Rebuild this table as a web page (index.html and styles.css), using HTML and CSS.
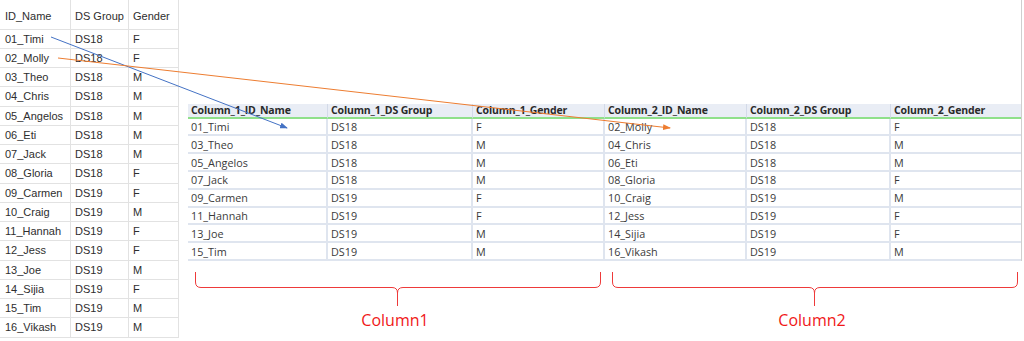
FILE: index.html
```html
<!DOCTYPE html>
<html>
<head>
<meta charset="utf-8">
<link rel="stylesheet" href="styles.css">
</head>
<body>
<div class="page">
  <div class="src">
    <div class="c h">ID_Name</div><div class="c h">DS Group</div><div class="c h">Gender</div>
    <div class="c">01_Timi</div><div class="c">DS18</div><div class="c">F</div>
    <div class="c">02_Molly</div><div class="c">DS18</div><div class="c">F</div>
    <div class="c">03_Theo</div><div class="c">DS18</div><div class="c">M</div>
    <div class="c">04_Chris</div><div class="c">DS18</div><div class="c">M</div>
    <div class="c">05_Angelos</div><div class="c">DS18</div><div class="c">M</div>
    <div class="c">06_Eti</div><div class="c">DS18</div><div class="c">M</div>
    <div class="c">07_Jack</div><div class="c">DS18</div><div class="c">M</div>
    <div class="c">08_Gloria</div><div class="c">DS18</div><div class="c">F</div>
    <div class="c">09_Carmen</div><div class="c">DS19</div><div class="c">F</div>
    <div class="c">10_Craig</div><div class="c">DS19</div><div class="c">M</div>
    <div class="c">11_Hannah</div><div class="c">DS19</div><div class="c">F</div>
    <div class="c">12_Jess</div><div class="c">DS19</div><div class="c">F</div>
    <div class="c">13_Joe</div><div class="c">DS19</div><div class="c">M</div>
    <div class="c">14_Sijia</div><div class="c">DS19</div><div class="c">F</div>
    <div class="c">15_Tim</div><div class="c">DS19</div><div class="c">M</div>
    <div class="c">16_Vikash</div><div class="c">DS19</div><div class="c">M</div>
  </div>
  <div class="main">
    <div class="result">
      <div class="grid">
        <div class="g gh">Column_1_ID_Name</div><div class="g gh">Column_1_DS Group</div><div class="g gh">Column_1_Gender</div><div class="g gh">Column_2_ID_Name</div><div class="g gh">Column_2_DS Group</div><div class="g gh">Column_2_Gender</div>
        <div class="g">01_Timi</div><div class="g">DS18</div><div class="g">F</div><div class="g">02_Molly</div><div class="g">DS18</div><div class="g">F</div>
        <div class="g">03_Theo</div><div class="g">DS18</div><div class="g">M</div><div class="g">04_Chris</div><div class="g">DS18</div><div class="g">M</div>
        <div class="g">05_Angelos</div><div class="g">DS18</div><div class="g">M</div><div class="g">06_Eti</div><div class="g">DS18</div><div class="g">M</div>
        <div class="g">07_Jack</div><div class="g">DS18</div><div class="g">M</div><div class="g">08_Gloria</div><div class="g">DS18</div><div class="g">F</div>
        <div class="g">09_Carmen</div><div class="g">DS19</div><div class="g">F</div><div class="g">10_Craig</div><div class="g">DS19</div><div class="g">M</div>
        <div class="g">11_Hannah</div><div class="g">DS19</div><div class="g">F</div><div class="g">12_Jess</div><div class="g">DS19</div><div class="g">F</div>
        <div class="g">13_Joe</div><div class="g">DS19</div><div class="g">M</div><div class="g">14_Sijia</div><div class="g">DS19</div><div class="g">F</div>
        <div class="g">15_Tim</div><div class="g">DS19</div><div class="g">M</div><div class="g">16_Vikash</div><div class="g">DS19</div><div class="g">M</div>
      </div>
    </div>
    <div class="notes">
      <div class="note">
        <svg class="brace" width="406" height="35" viewBox="0 0 406 35"><path d="M0.5,0 V10 Q0.5,15.5 6,15.5 H197 Q202.5,15.5 202.5,21 V34 M405.5,0 V10 Q405.5,15.5 400,15.5 H208 Q202.5,15.5 202.5,21"/></svg>
        <div class="label">Column1</div>
      </div>
      <div class="note">
        <svg class="brace" width="406" height="35" viewBox="0 0 406 35"><path d="M0.5,0 V10 Q0.5,15.5 6,15.5 H197 Q202.5,15.5 202.5,21 V34 M405.5,0 V10 Q405.5,15.5 400,15.5 H208 Q202.5,15.5 202.5,21"/></svg>
        <div class="label">Column2</div>
      </div>
    </div>
  </div>
</div>
<svg class="arrows" width="1024" height="341" viewBox="0 0 1024 341">
  <defs>
    <marker id="hb" markerWidth="8" markerHeight="6" refX="7" refY="3" orient="auto" markerUnits="userSpaceOnUse"><path d="M0,0 L8,3 L0,6 Z" fill="#4472c4"/></marker>
    <marker id="ho" markerWidth="8" markerHeight="6" refX="7" refY="3" orient="auto" markerUnits="userSpaceOnUse"><path d="M0,0 L8,3 L0,6 Z" fill="#ed7d31"/></marker>
  </defs>
  <line x1="51" y1="37" x2="287" y2="128" stroke="#4472c4" stroke-width="1" marker-end="url(#hb)"/>
  <line x1="58" y1="58" x2="670" y2="128" stroke="#ed7d31" stroke-width="1" marker-end="url(#ho)"/>
</svg>
</body>
</html>
```

FILE: styles.css
```css
html, body {
  margin: 0;
  padding: 0;
  background: #ffffff;
}
body {
  position: relative;
  width: 1024px;
  height: 341px;
  overflow: hidden;
}
.page {
  display: flex;
  align-items: flex-start;
}
.src {
  display: grid;
  grid-template-columns: 71px 58px 50px;
  grid-template-rows: 29.5px;
  grid-auto-rows: 19.25px;
  font-family: "Liberation Sans", Arial, sans-serif;
  font-size: 11px;
  color: #2e2e2e;
  flex: none;
}
.c {
  box-sizing: border-box;
  border-right: 1px solid #e2e2e2;
  border-bottom: 1px solid #e2e2e2;
  padding-left: 4px;
  display: flex;
  align-items: center;
  white-space: nowrap;
}
.c:nth-child(3n+1) { padding-left: 5px; }
.c.h {
  align-items: flex-start;
  padding-top: 9px;
  line-height: 14px;
}
.main {
  margin-left: 9px;
  display: flex;
  flex-direction: column;
}
.result {
  padding-top: 104px;
  border-right: 1px solid #cfcfcf;
  width: 833px;
}
.grid {
  display: grid;
  grid-template-columns: 140px 145px 132px 142px 144px 130px;
  grid-template-rows: 14.7px;
  grid-auto-rows: 17.8px;
  font-family: "Open Sans", "Noto Sans", sans-serif;
  font-size: 10.8px;
  color: #3a3a3a;
}
.g {
  box-sizing: border-box;
  border-bottom: 2px solid #dfe5ef;
  border-right: 2px solid #dfe5ef;
  padding-left: 3px;
  display: flex;
  align-items: center;
  white-space: nowrap;
  overflow: hidden;
}
.g:nth-child(6n) { border-right: none; }
.g.gh {
  background: #e9edf5;
  border-bottom: 2px solid #8fe08a;
  border-right: 1px solid #d3dae8;
  font-size: 10.5px;
  font-weight: 700;
  color: #2a2a2a;
  letter-spacing: -0.15px;
}
.g.gh:nth-child(6n) { border-right: none; }
.notes {
  display: flex;
  gap: 11px;
  padding-left: 7px;
  padding-top: 10.5px;
}
.note {
  display: flex;
  flex-direction: column;
  align-items: center;
  width: 406px;
}
.brace {
  display: block;
  fill: none;
  stroke: #ee3a3a;
  stroke-width: 1;
}
.label {
  margin-top: 3px;
  margin-right: 6px;
  font-family: "Open Sans", "Noto Sans", sans-serif;
  font-size: 16px;
  line-height: 20px;
  color: #f01818;
}
.arrows {
  position: absolute;
  left: 0;
  top: 0;
  pointer-events: none;
}
```
